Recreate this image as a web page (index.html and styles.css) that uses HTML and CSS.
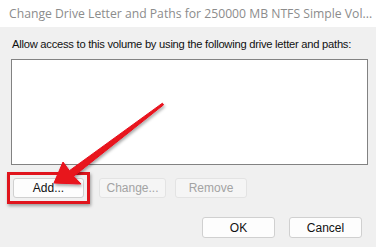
FILE: index.html
```html
<!DOCTYPE html>
<html lang="en">
<head>
    <meta charset="UTF-8">
    <title>Change Drive Letter and Paths</title>
    <link rel="stylesheet" href="styles.css">
</head>
<body>

    <div class="dialog">
        <div class="titlebar">
            <span class="title">Change Drive Letter and Paths for 250000 MB NTFS Simple Vol...</span>
            <svg class="close" width="10" height="10" viewBox="0 0 10 10">
                <path d="M0.5 0.5 L9.5 9.5 M9.5 0.5 L0.5 9.5" stroke="#8a8a8a" stroke-width="1" fill="none"/>
            </svg>
        </div>

        <div class="content">
            <p class="label">Allow access to this volume by using the following drive letter and paths:</p>
            <div class="listbox"></div>

            <div class="actions">
                <span class="highlight">
                    <button class="btn add">Add...</button>
                </span>
                <button class="btn change" disabled>Change...</button>
                <button class="btn remove" disabled>Remove</button>
            </div>

            <div class="footer">
                <button class="btn ok">OK</button>
                <button class="btn cancel">Cancel</button>
            </div>
        </div>

        <!-- annotation arrow pointing at the Add button -->
        <svg class="arrow" width="376" height="247" viewBox="0 0 376 247">
            <defs>
                <filter id="shadow" x="-20%" y="-20%" width="140%" height="140%">
                    <feDropShadow dx="1" dy="2" stdDeviation="1.5" flood-color="#000" flood-opacity="0.35"/>
                </filter>
            </defs>
            <polygon points="162.4,103.2 163.6,104.8 73.6,176.3 81,184 54,183 63,162 69.4,170.7"
                     fill="#e8121c" stroke="#e8121c" stroke-width="1" stroke-linejoin="round"
                     filter="url(#shadow)"/>
        </svg>
    </div>

</body>
</html>
```

FILE: styles.css
```css
body {
    margin: 0;
    font-family: "Liberation Sans", Arial, sans-serif;
}
.dialog {
    position: relative;
    width: 376px;
    height: 247px;
    background-color: #f0f0f0;
    overflow: hidden;
}
.titlebar {
    height: 27px;
    background-color: #fff;
    display: flex;
    align-items: center;
    justify-content: space-between;
    padding: 0 11px 0 9px;
}
.title {
    font-family: "Open Sans", sans-serif;
    font-size: 12.2px;
    color: #8c8c8c;
    white-space: nowrap;
}
.content {
    padding: 0 8px 0 11px;
}
.label {
    margin: 10px 0 0 1px;
    font-size: 11.2px;
    letter-spacing: -0.25px;
    line-height: 14px;
    color: #111;
    white-space: nowrap;
}
.listbox {
    margin-top: 8px;
    height: 104px;
    background-color: #fff;
    border: 1px solid #828282;
}
.actions {
    display: flex;
    gap: 15px;
    margin: 13px 0 0 2px;
}
.btn {
    height: 20px;
    padding: 0;
    font-family: "Liberation Sans", Arial, sans-serif;
    font-size: 12px;
    color: #111;
    background-color: #fdfdfd;
    border: 1px solid #d0d0d0;
    border-radius: 3px;
}
.btn:disabled {
    color: #a3a3a3;
    background-color: #f5f5f5;
    border-color: #e3e3e3;
}
.highlight {
    display: inline-flex;
    margin: -6px;
    padding: 3px;
    border: 3px solid #e0141c;
    box-shadow: 1px 2px 3px rgba(0, 0, 0, 0.35);
}
.add {
    width: 71px;
}
.change {
    width: 67px;
}
.remove {
    width: 72px;
    margin-left: -6px;
}
.footer {
    display: flex;
    justify-content: flex-end;
    gap: 14px;
    margin: 19px 6px 0 0;
}
.footer .btn {
    width: 73px;
    height: 21px;
}
.arrow {
    position: absolute;
    left: 0;
    top: 0;
    pointer-events: none;
}
```
